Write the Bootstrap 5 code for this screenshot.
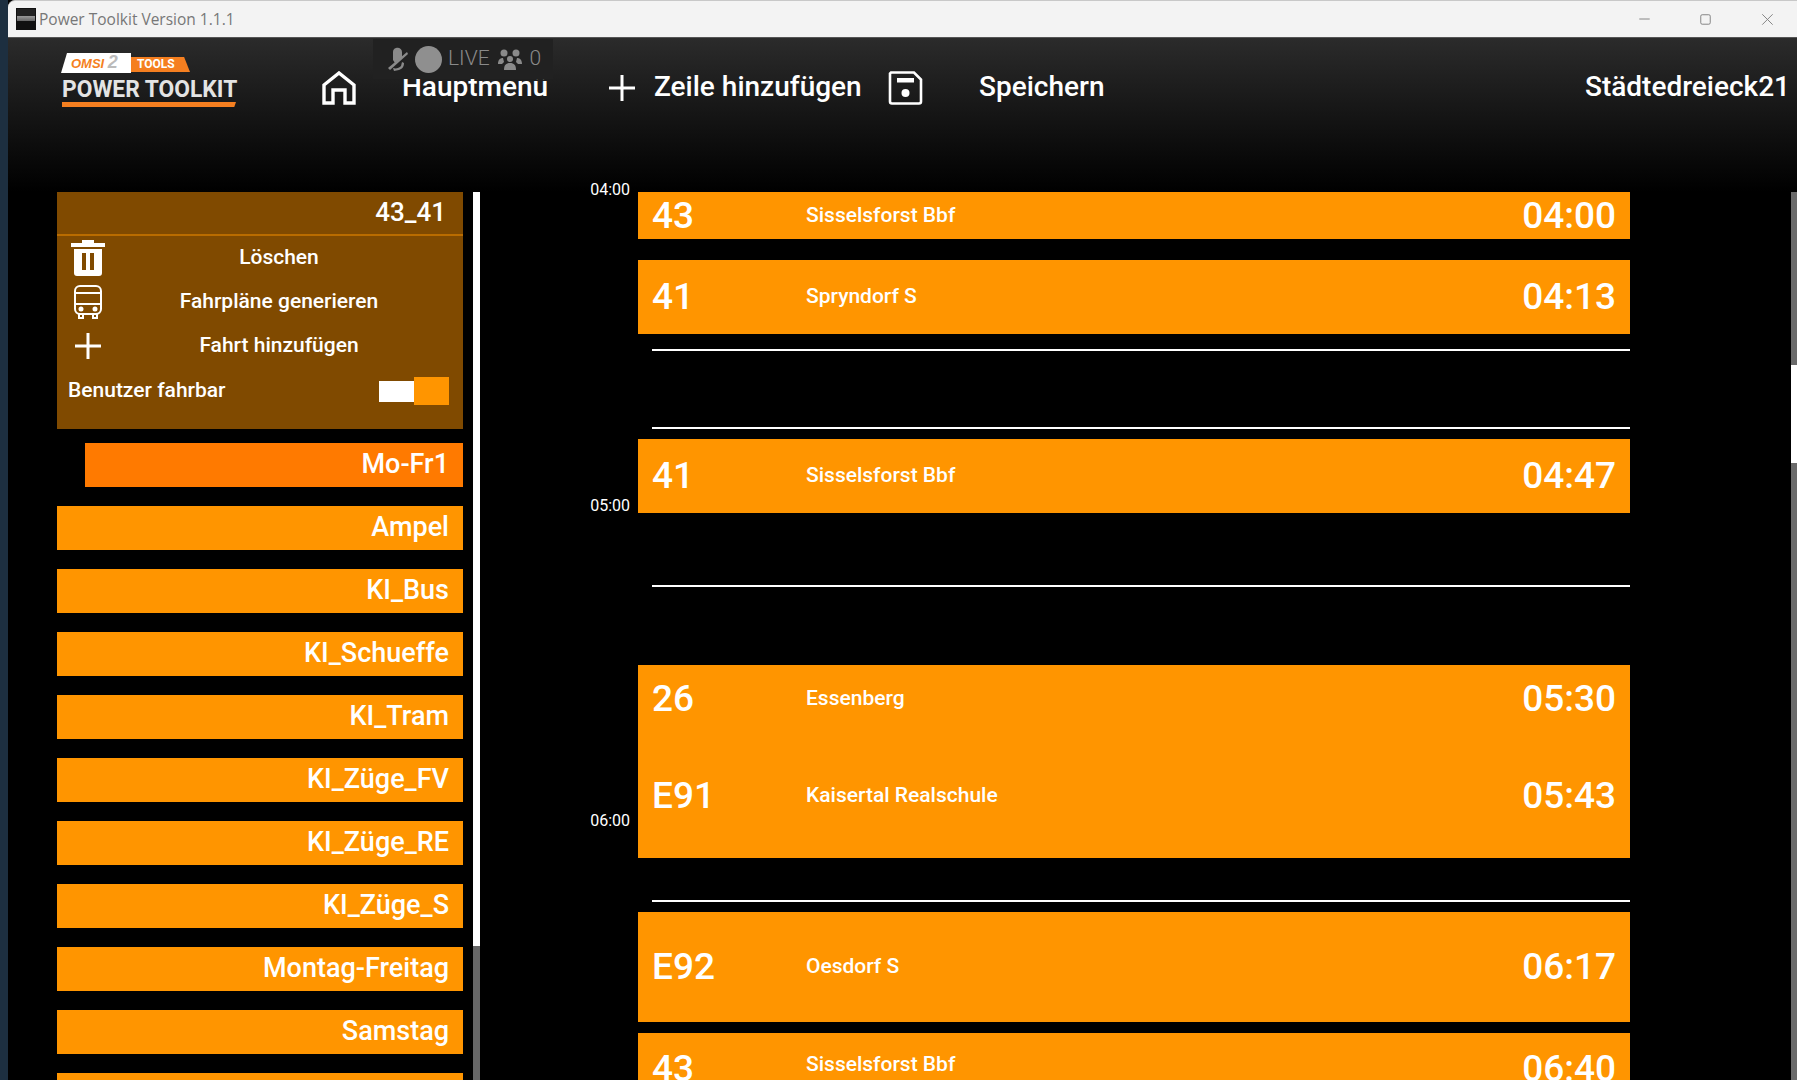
<!DOCTYPE html>
<html lang="de">
<head>
  <meta charset="UTF-8">
  <title>Power Toolkit Version 1.1.1</title>
  <link rel="stylesheet" href="https://cdn.jsdelivr.net/npm/bootstrap@5.3.1/dist/css/bootstrap.min.css">
  <style>
    html, body { height: 100%; }
    body { background: #1d2f40; overflow: hidden; font-family: Roboto, "Liberation Sans", sans-serif; font-weight: 500; color: #fff; }
    .app-window { position: relative; margin-left: 8px; height: 1080px; background: #000; overflow: hidden; }

    /* title bar */
    .title-strip { height: 38px; background: #f3f3f3; border-top-left-radius: 7px; border-top: 1px solid #c8c8c8; border-bottom: 1px solid #555; }
    .title-icon { width: 20px; height: 22px; margin-left: 8px; background: linear-gradient(#222 35%, #999 35%, #666 60%, #111 60%); border: 1px solid #111; }
    .title-text { margin-left: 3px; font: 400 15.5px "Open Sans", sans-serif; color: #777; }
    .win-btn { width: 61px; height: 100%; stroke: #808080; }

    /* header */
    .top-head { height: 154px; padding-top: 33px; background: linear-gradient(#2b2b2b, #151515 50%, #000); align-items: flex-start; font-size: 28px; }
    .logo-box { width: 175px; margin-left: 53px; margin-top: -18px; position: relative; height: 54px; }
    .logo-white { position: absolute; left: 0; top: 0; width: 70px; height: 20px; background: #fff; clip-path: polygon(6px 0, 100% 0, 100% 100%, 0 100%); font: italic 700 13px "Liberation Sans", sans-serif; padding: 3px 0 0 10px; color: #f57f20; white-space: nowrap; }
    .logo-white span { color: #bbb; font-size: 18px; line-height: 10px; }
    .logo-tools { position: absolute; left: 70px; top: 4px; width: 59px; height: 15px; background: #f57f20; clip-path: polygon(0 0, 90% 0, 100% 100%, 0 100%); font: 700 12px/15px Roboto, sans-serif; padding-left: 6px; }
    .logo-name { position: absolute; left: 1px; top: 23px; font: 700 24.5px/26px Roboto, sans-serif; color: #e4e4e4; white-space: nowrap; transform: scaleX(.93); transform-origin: left; }
    .logo-line { position: absolute; left: 1px; top: 49px; width: 174px; height: 5px; background: #f57f20; clip-path: polygon(0 0, 100% 0, 99% 100%, 0 100%); }
    .nav-home { margin-left: 86px; margin-top: 0; }
    .nav-lbl { line-height: 32px; white-space: nowrap; }
    .nav-a { margin-left: 46px; width: 206px; }
    .nav-plus { margin-left: 0; margin-top: 3px; }
    .nav-b { margin-left: 18px; width: 206px; }
    .nav-save { margin-left: 28px; }
    .nav-c { margin-left: 56px; }
    .nav-right { margin-left: auto; margin-right: 7px; }
    .live-pill { position: absolute; left: 365px; top: 39px; width: 180px; height: 40px; background: #212121; color: #8a8a8a; font-weight: 300; font-size: 21px; padding-left: 14px; }
    .live-dot { width: 27px; height: 27px; border-radius: 50%; background: #8f8f8f; margin: 0 6px 0 7px; }

    /* sidebar */
    .work-area { height: 888px; }
    .side-col { width: 406px; margin-left: 49px; flex: none; font-size: 27px; }
    .unit-card { background: #804a00; height: 237px; font-size: 21px; }
    .unit-head { height: 44px; border-bottom: 2px solid #b96c00; font-size: 26px; line-height: 40px; padding-right: 17px; text-align: right; }
    .unit-row { height: 44px; }
    .unit-ico { width: 62px; flex: none; text-align: center; line-height: 0; }
    .unit-txt { width: 320px; text-align: center; }
    .unit-switch { height: 46px; padding: 0 14px 0 11px; }
    .sw-off { width: 35px; height: 21px; background: #fff; }
    .sw-on { width: 35px; height: 28px; background: #ff9500; }
    .group-btn { height: 44px; margin-top: 19px; background: #ff9500; text-align: right; padding-right: 14px; line-height: 42px; }
    .group-btn.active-group { margin-top: 14px; margin-left: 28px; background: #ff7a00; }
    .bar-v { width: 7px; margin-left: 10px; flex: none; background: #666; position: relative; }
    .bar-thumb { background: #fff; height: 754px; }

    /* timetable */
    .plan-col { position: relative; margin-left: 158px; width: 992px; flex: none; }
    .hour-tag { position: absolute; right: 100%; margin-right: 8px; font: 400 16px/20px Roboto, sans-serif; }
    .trip-box { background: #ff9500; }
    .trip-line { padding: 0 14px; }
    .trip-no { width: 154px; font-size: 37px; }
    .trip-dest { font-size: 21px; }
    .trip-time { margin-left: auto; font-size: 37px; }
    .hr-line { height: 2px; margin-left: 14px; background: #fff; }
    .h-47 { height: 47px; } .h-74 { height: 74px; } .h-68 { height: 68px; } .h-110 { height: 110px; } .h-80 { height: 80px; }
    .mt-11 { margin-top: 11px; } .mt-10 { margin-top: 10px; } .mt-15 { margin-top: 15px; } .mt-21 { margin-top: 21px; }
    .mt-42 { margin-top: 42px; } .mt-72 { margin-top: 72px; } .mt-76 { margin-top: 76px; } .mt-78 { margin-top: 78px; }
    .pb-28 { padding-bottom: 28px; } .gap-29 { gap: 29px; }
    .page-scroll { position: absolute; right: 0; top: 192px; bottom: 0; width: 6px; background: #6a6a6a; }
    .page-thumb { position: absolute; right: 0; top: 173px; height: 98px; width: 6px; background: #fff; }
  </style>
</head>
<body>
  <div class="app-window">
    <!-- window title -->
    <div class="title-strip d-flex align-items-center">
      <div class="title-icon"></div>
      <div class="title-text">Power Toolkit Version 1.1.1</div>
      <div class="ms-auto d-flex h-100">
        <svg class="win-btn" viewBox="0 0 61 38" fill="none"><path d="M25 19h11"/></svg>
        <svg class="win-btn" viewBox="0 0 61 38" fill="none"><rect x="25.5" y="14.5" width="10" height="10" rx="1.5"/></svg>
        <svg class="win-btn" viewBox="0 0 61 38" fill="none"><path d="M26 14l11 11M37 14l-11 11"/></svg>
      </div>
    </div>

    <!-- header -->
    <div class="top-head d-flex">
      <div class="logo-box">
        <div class="logo-white">OMSI <span>2</span></div>
        <div class="logo-tools">TOOLS</div>
        <div class="logo-name">POWER TOOLKIT</div>
        <div class="logo-line"></div>
      </div>
      <svg class="nav-home" width="34" height="34" viewBox="0 0 34 34" fill="none" stroke="#fff" stroke-width="3.4"><path d="M2 32V14L17 2l15 12v18h-9V19H11v13z"/></svg>
      <div class="nav-lbl nav-a">Hauptmenü</div>
      <svg class="nav-plus" width="28" height="28" viewBox="0 0 28 28" stroke="#fff" stroke-width="3"><path d="M14 1v26M1 14h26"/></svg>
      <div class="nav-lbl nav-b">Zeile hinzufügen</div>
      <svg class="nav-save" width="35" height="34" viewBox="0 0 35 34" fill="none"><path d="M3 1.5h23l7 7v22a2 2 0 0 1-2 2H4a2 2 0 0 1-2-2v-28z" stroke="#fff" stroke-width="2.6"/><rect x="9" y="7" width="17" height="4.5" fill="#fff"/><circle cx="17.5" cy="22" r="4" fill="#fff"/></svg>
      <div class="nav-lbl nav-c">Speichern</div>
      <div class="nav-lbl nav-right">Städtedreieck21</div>
    </div>
    <div class="live-pill d-flex align-items-center">
      <svg width="21" height="24" viewBox="0 0 21 24" fill="#8a8a8a"><path d="M9 1c3-1 6 1 6 4v6l-7 5-2-3V5c0-2 1-3.500 3-4z"/><path d="M1 21L20 5l1 2L3 23z"/><path d="M6 21c3 1 6 0 8-2l1-4 2 1c0 4-2 6-5 7l-5 1z"/></svg>
      <div class="live-dot"></div>
      <span>LIVE</span>
      <svg class="ms-2" width="24" height="21" viewBox="0 0 24 21" fill="#8a8a8a"><circle cx="6" cy="4" r="3.500"/><circle cx="18" cy="4" r="3.500"/><circle cx="12" cy="10" r="3"/><path d="M0 15c0-4 2-6 5-6l1 4-2 2zM24 15c0-4-2-6-5-6l-1 4 2 2zM6 21c0-5 2-7 6-7s6 2 6 7z"/></svg>
      <span class="ms-2">0</span>
    </div>

    <div class="work-area d-flex">
      <!-- left column -->
      <div class="side-col">
        <div class="unit-card">
          <div class="unit-head">43_41</div>
          <div class="unit-row d-flex align-items-center">
            <div class="unit-ico"><svg width="34" height="36" viewBox="0 0 34 36" fill="#fff"><path d="M0 3h11V0h12v3h11v4H0zM3 9h28v24a3 3 0 0 1-3 3H6a3 3 0 0 1-3-3zM11 13v17h4V13zM19 13v17h4V13z" fill-rule="evenodd"/></svg></div>
            <div class="unit-txt">Löschen</div>
          </div>
          <div class="unit-row d-flex align-items-center">
            <div class="unit-ico"><svg width="28" height="34" viewBox="0 0 28 34" fill="none" stroke="#fff" stroke-width="2"><rect x="1" y="1" width="26" height="28" rx="5"/><path d="M1 8h26M1 19h26M5 29v4h4v-4M19 29v4h4v-4"/><circle cx="7" cy="24" r="1.500" fill="#fff"/><circle cx="21" cy="24" r="1.500" fill="#fff"/></svg></div>
            <div class="unit-txt">Fahrpläne generieren</div>
          </div>
          <div class="unit-row d-flex align-items-center">
            <div class="unit-ico"><svg width="26" height="26" viewBox="0 0 26 26" stroke="#fff" stroke-width="3"><path d="M13 0v26M0 13h26"/></svg></div>
            <div class="unit-txt">Fahrt hinzufügen</div>
          </div>
          <div class="unit-switch d-flex align-items-center">
            <span>Benutzer fahrbar</span>
            <div class="ms-auto d-flex align-items-center"><div class="sw-off"></div><div class="sw-on"></div></div>
          </div>
        </div>
        <div class="group-btn active-group">Mo-Fr1</div>
        <div class="group-btn">Ampel</div>
        <div class="group-btn">KI_Bus</div>
        <div class="group-btn">KI_Schueffe</div>
        <div class="group-btn">KI_Tram</div>
        <div class="group-btn">KI_Züge_FV</div>
        <div class="group-btn">KI_Züge_RE</div>
        <div class="group-btn">KI_Züge_S</div>
        <div class="group-btn">Montag-Freitag</div>
        <div class="group-btn">Samstag</div>
        <div class="group-btn"></div>
      </div>
      <div class="bar-v"><div class="bar-thumb"></div></div>

      <!-- timetable -->
      <div class="plan-col">
        <div class="hour-tag" style="top:-12px">04:00</div>
        <div class="hour-tag" style="top:304px">05:00</div>
        <div class="hour-tag" style="top:619px">06:00</div>

        <div class="trip-box h-47 trip-line d-flex align-items-center">
          <div class="trip-no">43</div><div class="trip-dest">Sisselsforst Bbf</div><div class="trip-time">04:00</div>
        </div>
        <div class="trip-box h-74 mt-21 trip-line d-flex align-items-center">
          <div class="trip-no">41</div><div class="trip-dest">Spryndorf S</div><div class="trip-time">04:13</div>
        </div>
        <div class="hr-line mt-15"></div>
        <div class="hr-line mt-76"></div>
        <div class="trip-box h-74 mt-10 trip-line d-flex align-items-center">
          <div class="trip-no">41</div><div class="trip-dest">Sisselsforst Bbf</div><div class="trip-time">04:47</div>
        </div>
        <div class="hr-line mt-72"></div>
        <div class="trip-box mt-78 pb-28 d-flex flex-column gap-29">
          <div class="h-68 trip-line d-flex align-items-center">
            <div class="trip-no">26</div><div class="trip-dest">Essenberg</div><div class="trip-time">05:30</div>
          </div>
          <div class="h-68 trip-line d-flex align-items-center">
            <div class="trip-no">E91</div><div class="trip-dest">Kaisertal Realschule</div><div class="trip-time">05:43</div>
          </div>
        </div>
        <div class="hr-line mt-42"></div>
        <div class="trip-box h-110 mt-10 trip-line d-flex align-items-center">
          <div class="trip-no">E92</div><div class="trip-dest">Oesdorf S</div><div class="trip-time">06:17</div>
        </div>
        <div class="trip-box h-80 mt-11 trip-line d-flex align-items-start pt-2">
          <div class="trip-no">43</div><div class="trip-dest pt-2">Sisselsforst Bbf</div><div class="trip-time">06:40</div>
        </div>
      </div>
    </div>
    <div class="page-scroll"><div class="page-thumb"></div></div>
  </div>
  <script src="https://cdn.jsdelivr.net/npm/bootstrap@5.3.1/dist/js/bootstrap.bundle.min.js"></script>
</body>
</html>
